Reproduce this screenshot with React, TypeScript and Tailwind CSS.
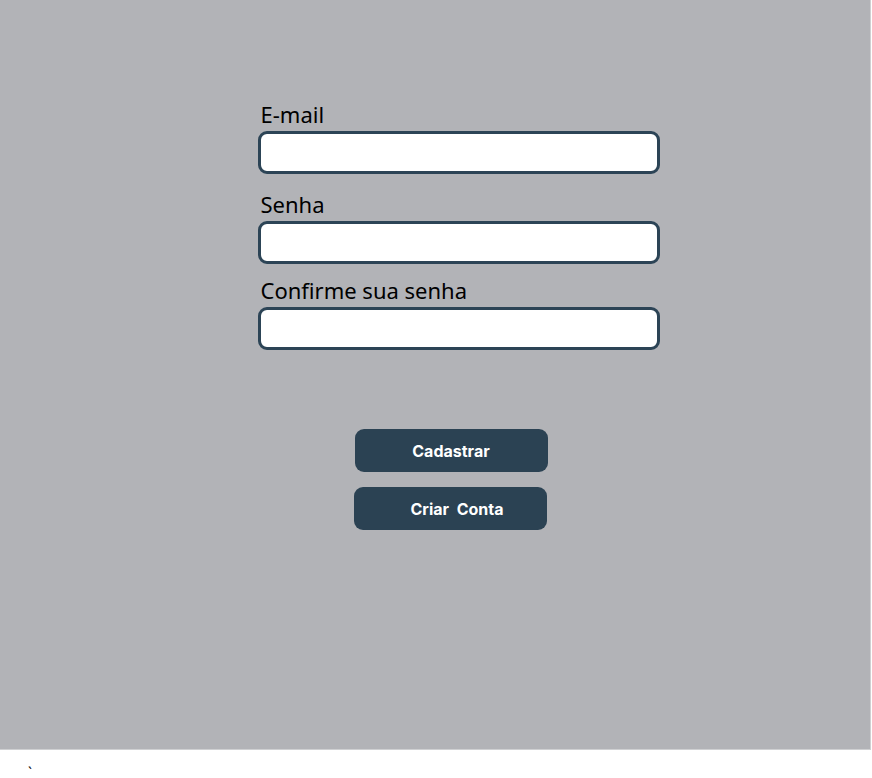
import React from 'react';

const labelFont = { fontFamily: '"Noto Sans", "Liberation Sans", sans-serif' };

function Field({ label, type, className }: { label: string; type: string; className?: string }) {
  return (
    <div className={`flex flex-col ${className ?? ''}`}>
      <label className="pl-[3px] text-[22px] leading-[28px] text-black" style={labelFont}>
        {label}
      </label>
      <input
        type={type}
        className="mt-[3px] h-[43px] w-[402px] rounded-[9px] border-[3px] border-[#2c4456] bg-white px-3 outline-none"
      />
    </div>
  );
}

export default function App() {
  return (
    <div className="bg-white">
      <div className="flex h-[750px] w-[871px] flex-col items-center border-b border-r border-[#cfd0d2] bg-[#b2b3b7]">
        <div className="ml-[47px] mt-[100px] flex flex-col">
          <Field label="E-mail" type="email" />
          <Field label="Senha" type="password" className="mt-[16px]" />
          <Field label="Confirme sua senha" type="password" className="mt-[12px]" />
        </div>
        <div className="mt-[79px] flex flex-col items-center gap-[15px] pl-[30px]">
          <button className="ml-[2px] h-[43px] w-[193px] rounded-[9px] bg-[#2b4253] text-[16px] font-bold text-white" style={{ fontFamily: 'Inter, sans-serif' }}>
            Cadastrar
          </button>
          <button className="h-[43px] w-[193px] rounded-[9px] bg-[#2b4253] pl-[14px] text-[16px] font-bold text-white" style={{ fontFamily: 'Inter, sans-serif' }}>
            Criar&nbsp; Conta
          </button>
        </div>
      </div>
      <div className="pl-[28px] pt-[16px] text-[14px] leading-none text-black">`</div>
    </div>
  );
}
